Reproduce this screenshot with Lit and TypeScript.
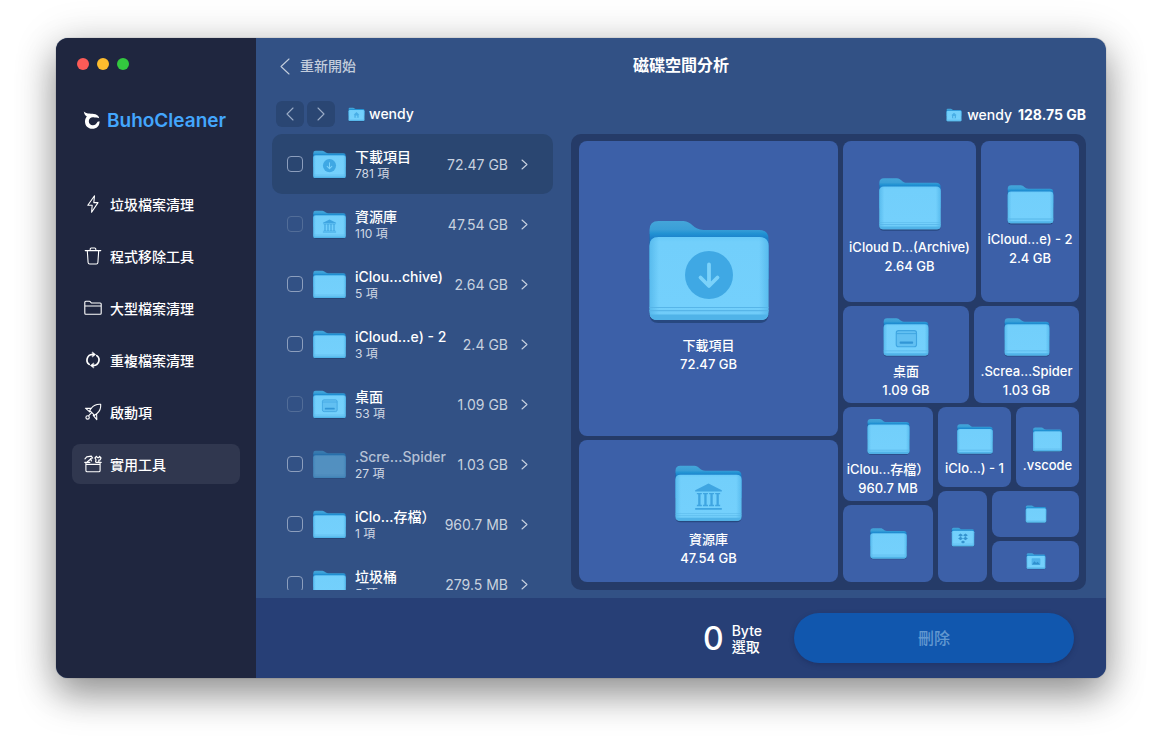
import { LitElement, html, svg, css, nothing } from "lit";
import { customElement, property, state } from "lit/decorators.js";
import { classMap } from "lit/directives/class-map.js";
import { styleMap } from "lit/directives/style-map.js";

type Emblem = "none" | "download" | "library" | "desktop" | "home" | "dropbox" | "pictures";

interface Entry {
  name: string;
  count: string;
  size: string;
  emblem: Emblem;
  locked?: boolean;
  hidden?: boolean;
}

interface Tile {
  weight: number;
  icon: number;
  emblem: Emblem;
  label: string;
  name?: string;
  size?: string;
}

interface Split {
  weight: number;
  dir: "row" | "column";
  parts: Array<Split | Tile>;
}

const ENTRIES: Entry[] = [
  { name: "下載項目", count: "781 項", size: "72.47 GB", emblem: "download" },
  { name: "資源庫", count: "110 項", size: "47.54 GB", emblem: "library", locked: true },
  { name: "iClou…chive)", count: "5 項", size: "2.64 GB", emblem: "none" },
  { name: "iCloud…e) - 2", count: "3 項", size: "2.4 GB", emblem: "none" },
  { name: "桌面", count: "53 項", size: "1.09 GB", emblem: "desktop", locked: true },
  { name: ".Scre…Spider", count: "27 項", size: "1.03 GB", emblem: "none", hidden: true },
  { name: "iClo…存檔）", count: "1 項", size: "960.7 MB", emblem: "none" },
  { name: "垃圾桶", count: "5 項", size: "279.5 MB", emblem: "none" },
];

const tile = (weight: number, icon: number, emblem: Emblem, label: string, name?: string, size?: string): Tile =>
  ({ weight, icon, emblem, label, name, size });

const split = (weight: number, dir: "row" | "column", ...parts: Array<Split | Tile>): Split =>
  ({ weight, dir, parts });

const TREE: Split = split(1, "row",
  split(259, "column",
    tile(295, 128, "download", "下載項目", "下載項目", "72.47 GB"),
    tile(142, 71, "library", "資源庫", "資源庫", "47.54 GB"),
  ),
  split(236, "column",
    split(161, "row",
      tile(133, 66, "none", "iCloud", "iCloud D…(Archive)", "2.64 GB"),
      tile(98, 49, "none", "iCloud", "iCloud…e) - 2", "2.4 GB"),
    ),
    split(97, "row",
      tile(126, 48, "desktop", "桌面", "桌面", "1.09 GB"),
      tile(105, 48, "none", "Spider", ".Screa…Spider", "1.03 GB"),
    ),
    split(175, "row",
      split(90, "column",
        tile(94, 45, "none", "iCloud", "iClou…存檔）", "960.7 MB"),
        tile(77, 39, "none", "垃圾桶"),
      ),
      split(141, "column",
        split(80, "row",
          tile(73, 38, "none", "iCloud", "iClo…) - 1"),
          tile(63, 31, "none", "vscode", ".vscode"),
        ),
        split(91, "row",
          tile(49, 24, "dropbox", "Dropbox"),
          split(87, "column",
            tile(45, 22, "none", "資料夾"),
            tile(41, 20, "pictures", "圖片"),
          ),
        ),
      ),
    ),
  ),
);

const EMBLEMS: Record<Emblem, unknown> = {
  none: nothing,
  download: svg`
    <circle cx="64" cy="68" r="24" fill="#3fa8e4"/>
    <path d="M64 57.500v21M55.500 70.500l8.500 8.500 8.500-8.500" fill="none" stroke="#7bd2fa" stroke-width="3.800" stroke-linecap="round" stroke-linejoin="round"/>`,
  library: svg`
    <g fill="#3fa5e1">
      <path d="M64 46l24 12v2.500H40V58z"/>
      <path d="M43 63h9v2.400h-2.400v19H52v2.400h-9v-2.400h2.400v-19H43zM54 63h9v2.400h-2.400v19H63v2.400h-9v-2.400h2.400v-19H54zM65 63h9v2.400h-2.400v19H74v2.400h-9v-2.400h2.400v-19H65zM76 63h9v2.400h-2.400v19H85v2.400h-9v-2.400h2.400v-19H76z"/>
      <path d="M40 90h48v3.400H40z"/>
    </g>`,
  desktop: svg`
    <rect x="38" y="47" width="54" height="43" rx="6" fill="#62c0f2" stroke="#3fa5e1" stroke-width="3"/>
    <path d="M38 55h54" stroke="#3fa5e1" stroke-width="2.600"/>
    <rect x="47" y="76" width="36" height="6" rx="2" fill="#3296d6"/>`,
  home: svg`
    <path d="M64 46L42 65h6v24h32V65h6z" fill="#49aee6"/>
    <rect x="58" y="72" width="12" height="17" fill="#74d0fa"/>`,
  dropbox: svg`
    <path d="M51 45l13 9-13 9-13-9zM77 45l13 9-13 9-13-9zM51 63l13 9-13 9-13-9zM77 63l13 9-13 9-13-9zM64 82l12 8-12 8-12-8z" fill="#3593cf"/>`,
  pictures: svg`
    <rect x="36" y="46" width="56" height="44" rx="5" fill="#4fb2ea"/>
    <path d="M38 86l16-20 11 11 9-8 16 17z" fill="#2f8fce"/>`,
};

@customElement("folder-icon")
export class FolderIcon extends LitElement {
  @property() emblem: Emblem = "none";
  @property({ type: Number }) size = 32;

  static styles = css`
    :host { display: block; flex: none; line-height: 0; }
    .folder { display: block; overflow: visible; }
  `;

  render() {
    return html`
      <svg class="folder" width=${this.size} height=${this.size} viewBox="0 0 128 128" aria-hidden="true">
        <defs>
          <linearGradient id="back" gradientUnits="userSpaceOnUse" x1="0" y1="14" x2="0" y2="44">
            <stop offset="0" stop-color="#44a5d9"/>
            <stop offset="0.28" stop-color="#3a9fd7"/>
            <stop offset="0.42" stop-color="#2192d3"/>
            <stop offset="0.58" stop-color="#1b7fca"/>
            <stop offset="1" stop-color="#1b7fca"/>
          </linearGradient>
          <linearGradient id="front" x1="0" y1="0" x2="0" y2="1">
            <stop offset="0" stop-color="#68caf8"/>
            <stop offset="0.06" stop-color="#72cffb"/>
            <stop offset="0.85" stop-color="#74d0fc"/>
            <stop offset="1" stop-color="#6bc8f6"/>
          </linearGradient>
          <linearGradient id="sides" x1="0" y1="0" x2="1" y2="0">
            <stop offset="0" stop-color="#3ea7e0" stop-opacity="0.5"/>
            <stop offset="0.08" stop-color="#3ea7e0" stop-opacity="0"/>
            <stop offset="0.92" stop-color="#3ea7e0" stop-opacity="0"/>
            <stop offset="1" stop-color="#3ea7e0" stop-opacity="0.5"/>
          </linearGradient>
        </defs>
        <path d="M4.500 26v80q0 9 9 9h101q9 0 9-9V60z" fill="#16345f" opacity="0.55" transform="translate(0 1)"/>
        <path d="M4.500 23q0-9 9-9h25c8 0 10 9 20 9h56q9 0 9 9v40h-119z" fill="url(#back)"/>
        <path d="M4.500 39q0-9 9-9h101q9 0 9 9v66q0 8-8 8h-103q-8 0-8-8z" fill="url(#front)"/>
        <path d="M4.500 39q0-9 9-9h101q9 0 9 9v66q0 8-8 8h-103q-8 0-8-8z" fill="url(#sides)"/>
        <path d="M4.500 100h119v1h-119z" fill="#57b5e8"/>
        <path d="M4.500 103h119v1.200h-119z" fill="#57b5e8"/>
        <path d="M4.500 107.500h119q-1.500 5.500-8 5.500h-103q-6.500 0-8-5.500z" fill="#50b3e8"/>
        ${EMBLEMS[this.emblem]}
      </svg>
    `;
  }
}

@customElement("disk-treemap")
export class DiskTreemap extends LitElement {
  @property({ attribute: false }) tree: Split = TREE;

  static styles = css`
    :host { display: flex; box-sizing: border-box; min-width: 0; padding: 7px 7px 8px 8px; border-radius: 10px; background: #253b68; }
    .split { display: flex; min-width: 0; min-height: 0; }
    .row { flex-direction: row; gap: 5px; }
    .column { flex-direction: column; gap: 4px; }
    .tile {
      display: flex; flex-direction: column; align-items: center; justify-content: center;
      box-sizing: border-box; min-width: 0; min-height: 0; margin: 0; padding: 0; gap: 1px;
      border: 0; border-radius: 8px; background: #3c60a8; color: #fff;
      font: 500 13px/19px Inter, "Noto Sans CJK TC", sans-serif; white-space: nowrap; overflow: hidden;
    }
    .captioned { margin-top: 4px; }
    .caption { display: flex; flex-direction: column; }
  `;

  private node(n: Split | Tile): unknown {
    const grow = styleMap({ flex: `${n.weight} 1 0` });
    if ("parts" in n) {
      return html`<div class="split ${n.dir}" style=${grow}>${n.parts.map((p) => this.node(p))}</div>`;
    }
    return html`
      <button class="tile" style=${grow} aria-label=${n.name ?? n.label}>
        <folder-icon class=${classMap({ captioned: !!n.name })} .emblem=${n.emblem} .size=${n.icon}></folder-icon>
        ${n.name
          ? html`<span class="caption"><span>${n.name}</span>${n.size ? html`<span>${n.size}</span>` : nothing}</span>`
          : nothing}
      </button>
    `;
  }

  render() {
    return this.node(this.tree);
  }
}

const lineIcon = (body: unknown) => html`
  <svg class="menu-icon" width="18" height="18" viewBox="0 0 18 18" fill="none" stroke="currentColor"
    stroke-width="1.100" stroke-linejoin="round" stroke-linecap="round" aria-hidden="true">${body}</svg>`;

const MENU = [
  { label: "垃圾檔案清理", icon: svg`<path d="M10.500 0.800L3.800 10.200h4.400L7.600 17.200l6.400-9.600H9.800z"/>` },
  { label: "程式移除工具", icon: svg`<path d="M1.200 3.600h15.600M6.200 3.400V2q0-1 1-1h3.600q1 0 1 1v1.400M3.300 3.800l.8 11.700q.1 1.500 1.600 1.500h6.600q1.500 0 1.600-1.500l.8-11.700"/>` },
  { label: "大型檔案清理", icon: svg`<path d="M.8 14.200V3.300q0-1 1-1h3.600q.6 0 1 .5l1 1.200h8.800q1 0 1 1v9.200q0 1-1 1H1.800q-1 0-1-1zM.8 7h16.400"/>` },
  {
    label: "重複檔案清理",
    icon: svg`<g stroke-width="1.700"><path d="M5.200 13.400A5.500 5.500 0 0 1 8.600 3.500M12.800 4.600a5.500 5.500 0 0 1-3.400 9.900"/></g>
      <path d="M8.600 1.200l3 2.300-3 2.300zM9.400 12.200l-3 2.300 3 2.300z" fill="currentColor" stroke-width=".6"/>`,
  },
  {
    label: "啟動項",
    icon: svg`<path d="M16.700 1.300c-4-.3-7 .8-9.200 3.700L5.700 7.400l4.900 4.900L13 10.500c2.900-2.200 4-5.200 3.700-9.200zM7.300 5.400L1.400 5.200l4.300 3.600M12.600 10.700l.2 5.900-3.600-4.300M5.700 7.400L10.600 12.300M7.600 9.600l-2.800 3"/><circle cx="3.600" cy="14.400" r="1.700"/>`,
  },
  {
    label: "實用工具",
    icon: svg`<path d="M1.900 7.600v7.900q0 1.300 1.300 1.300h11.600q1.300 0 1.300-1.300V7.600M.8 7.400h5M12 7.400h5.200M2 9.400h14"/>
      <path d="M3.400 6.800l3-2.600M1 3.800l1.700-2 4.600-.6 1.300 1.800-2 .5.800 2.400M11.600 6.600l.4-1.800-1-1.800 1.400-1.700 1.200 1.300h1.400l.6-1.300 1.400 1.700-.8 1.800-1.400.4v1.400" stroke-width="1.200"/>`,
  },
];

@customElement("app-root")
export class AppRoot extends LitElement {
  @state() private active = 5;
  @state() private focused = 0;

  static styles = css`
    :host {
      display: flex; box-sizing: border-box; height: 100vh; padding: 38px 56px 74px; overflow: hidden;
      background: #fff; color: #fff; font: 500 14px/16px Inter, "Noto Sans CJK TC", sans-serif;
    }
    button { margin: 0; padding: 0; border: 0; background: none; color: inherit; font: inherit; text-align: left; }
    h1, ul { margin: 0; padding: 0; list-style: none; }
    .window {
      flex: 1; display: flex; min-width: 0; border-radius: 12px; overflow: hidden; background: #325185;
    }
    .frame {
      flex: 1; display: flex; min-width: 0; border-radius: 12px;
      box-shadow: 0 0 1px rgba(0, 0, 0, .6), 0 18px 36px rgba(0, 0, 0, .34), 0 4px 44px rgba(0, 0, 0, .18);
    }
    .sidebar { flex: 0 0 200px; box-sizing: border-box; padding: 20px 16px; background: #1f263f; }
    .lights { display: flex; gap: 8px; padding-left: 5px; }
    .light { width: 12px; height: 12px; border-radius: 50%; }
    .close { background: #fc5b57; }
    .minimise { background: #fdbc2e; }
    .zoom { background: #33c83f; }
    .brand { display: flex; align-items: center; gap: 6px; margin-top: 38px; padding-left: 11px; height: 24px; font-size: 19px; line-height: 24px; font-weight: 600; color: #43a6fd; }
    .brand-name { padding-top: 1px; }
    .menu { display: flex; flex-direction: column; gap: 12px; margin-top: 52px; }
    .menu-item { display: flex; align-items: center; gap: 8px; width: 100%; height: 40px; padding: 0 12px; border-radius: 8px; }
    .menu-item.active { background: #30374f; }
    .menu-icon { flex: none; display: block; }
    .menu-label { padding-top: 1px; }
    .main { flex: 1; min-width: 0; display: flex; flex-direction: column; }
    .header { display: grid; grid-template-columns: 1fr auto 1fr; align-items: center; height: 56px; padding: 0 24px; }
    .back { display: flex; align-items: center; gap: 10px; color: #c3cddc; }
    .title { padding-bottom: 2px; font-size: 16px; line-height: 20px; font-weight: 700; }
    .toolbar { display: flex; align-items: center; height: 40px; padding: 0 20px; }
    .step { display: grid; place-items: center; width: 28px; height: 26px; margin-right: 3px; border-radius: 6px; background: #2a4673; color: #9aabc6; }
    .crumb { display: flex; align-items: center; gap: 4px; margin-left: 10px; }
    .total { display: flex; align-items: center; gap: 5px; margin-left: auto; padding-top: 2px; }
    .total-size { margin-left: 1px; font-weight: 700; }
    .content { flex: 1; min-height: 0; display: flex; gap: 18px; padding: 0 20px 8px 16px; }
    .list { flex: 0 0 281px; overflow: hidden; }
    .entry { display: flex; align-items: center; box-sizing: border-box; height: 60px; padding: 0 25px 0 15px; border-radius: 10px; }
    .entry.focused { background: #2a4671; }
    .tick { appearance: none; flex: none; width: 16px; height: 16px; margin: 0 9px 0 0; border: 1px solid #8c9ebd; border-radius: 4px; }
    .tick:disabled { border-color: #526d98; }
    .tick:checked { background: #43a6fd; }
    .entry-folder.faded { opacity: .5; }
    .entry-text { flex: 1; min-width: 0; margin-left: 8px; padding-top: 4px; white-space: nowrap; }
    .entry-name { display: block; }
    .entry-name.faded { color: #b4c0d4; }
    .entry-count { display: block; font-size: 12px; line-height: 18px; font-weight: 400; color: #d0d8e4; }
    .entry-size { padding-top: 2px; font-weight: 400; color: #c8d1df; white-space: nowrap; }
    .open { flex: none; margin-left: 13px; color: #c8d1df; }
    .chevron { display: block; }
    .map { flex: 1; }
    .footer { flex: none; display: flex; align-items: center; justify-content: flex-end; height: 80px; box-sizing: border-box; padding: 0 32px; background: #273f76; }
    .amount { padding-top: 2px; font-size: 32px; line-height: 32px; }
    .unit { margin: 0 32px 0 8px; padding-top: 2px; }
    .unit-line { display: block; }
    .delete { width: 280px; height: 50px; border-radius: 25px; background: #1157ae; color: #6298d0; font-size: 16px; text-align: center; box-shadow: 0 2px 5px rgba(20, 35, 80, .35); }
  `;

  private chevron(dir: "left" | "right", w: number, h: number) {
    const d = dir === "left" ? `M${w - 1} 1L1 ${h / 2}L${w - 1} ${h - 1}` : `M1 1L${w - 1} ${h / 2}L1 ${h - 1}`;
    return html`<svg class="chevron" width=${w} height=${h} viewBox="0 0 ${w} ${h}" fill="none"
      stroke="currentColor" stroke-width="1.100" stroke-linecap="round" stroke-linejoin="round" aria-hidden="true"><path d=${d}/></svg>`;
  }

  private entry(e: Entry, i: number) {
    return html`
      <li class=${classMap({ entry: true, focused: i === this.focused })} @click=${() => (this.focused = i)}>
        <input class="tick" type="checkbox" id="tick-${i}" ?disabled=${e.locked ?? false}>
        <folder-icon class=${classMap({ "entry-folder": true, faded: !!e.hidden })} .emblem=${e.emblem} .size=${35}></folder-icon>
        <label class="entry-text" for="tick-${i}">
          <span class=${classMap({ "entry-name": true, faded: !!e.hidden })}>${e.name}</span>
          <span class="entry-count">${e.count}</span>
        </label>
        <span class="entry-size">${e.size}</span>
        <button class="open" aria-label="打開">${this.chevron("right", 7, 11)}</button>
      </li>
    `;
  }

  render() {
    return html`
      <div class="frame">
        <div class="window">
          <aside class="sidebar">
            <div class="lights">
              <button class="light close" aria-label="關閉"></button>
              <button class="light minimise" aria-label="縮到最小"></button>
              <button class="light zoom" aria-label="縮放"></button>
            </div>
            <div class="brand">
              <svg width="18" height="20" viewBox="0 0 18 20" aria-hidden="true">
                <path d="M.8 1.400C4 4.400 8.500 3 12.500 4.300c2 .7 3.300 2 3.700 3.900-1.600-.9-3-1-4.600-.6C9 6.300 6 8 5.800 11c-.1 2.500 1.700 4.200 4 4.200 2.500 0 3.800-1.500 4.800-3.400l1.900-.6c.4 4.500-3 7.600-7.200 7.600-4.300 0-7.300-3.100-7.300-7.300 0-2 .7-3.600 1.900-4.900C2.300 5.500 1.200 4 .8 1.400z" fill="#fff"/>
              </svg>
              <span class="brand-name">BuhoCleaner</span>
            </div>
            <nav class="menu">
              ${MENU.map((m, i) => html`
                <button class=${classMap({ "menu-item": true, active: i === this.active })} @click=${() => (this.active = i)}>
                  ${lineIcon(m.icon)}<span class="menu-label">${m.label}</span>
                </button>`)}
            </nav>
          </aside>
          <main class="main">
            <header class="header">
              <button class="back">${this.chevron("left", 10, 17)}<span>重新開始</span></button>
              <h1 class="title">磁碟空間分析</h1>
            </header>
            <div class="toolbar">
              <button class="step" aria-label="上一頁">${this.chevron("left", 8, 14)}</button>
              <button class="step" aria-label="下一頁">${this.chevron("right", 8, 14)}</button>
              <span class="crumb"><folder-icon .emblem=${"home"} .size=${17}></folder-icon><span>wendy</span></span>
              <span class="total">
                <folder-icon .emblem=${"home"} .size=${16}></folder-icon><span>wendy</span><span class="total-size">128.75 GB</span>
              </span>
            </div>
            <div class="content">
              <ul class="list">${ENTRIES.map((e, i) => this.entry(e, i))}</ul>
              <disk-treemap class="map"></disk-treemap>
            </div>
            <footer class="footer">
              <span class="amount">0</span>
              <span class="unit"><span class="unit-line">Byte</span><span class="unit-line">選取</span></span>
              <button class="delete">刪除</button>
            </footer>
          </main>
        </div>
      </div>
    `;
  }
}
